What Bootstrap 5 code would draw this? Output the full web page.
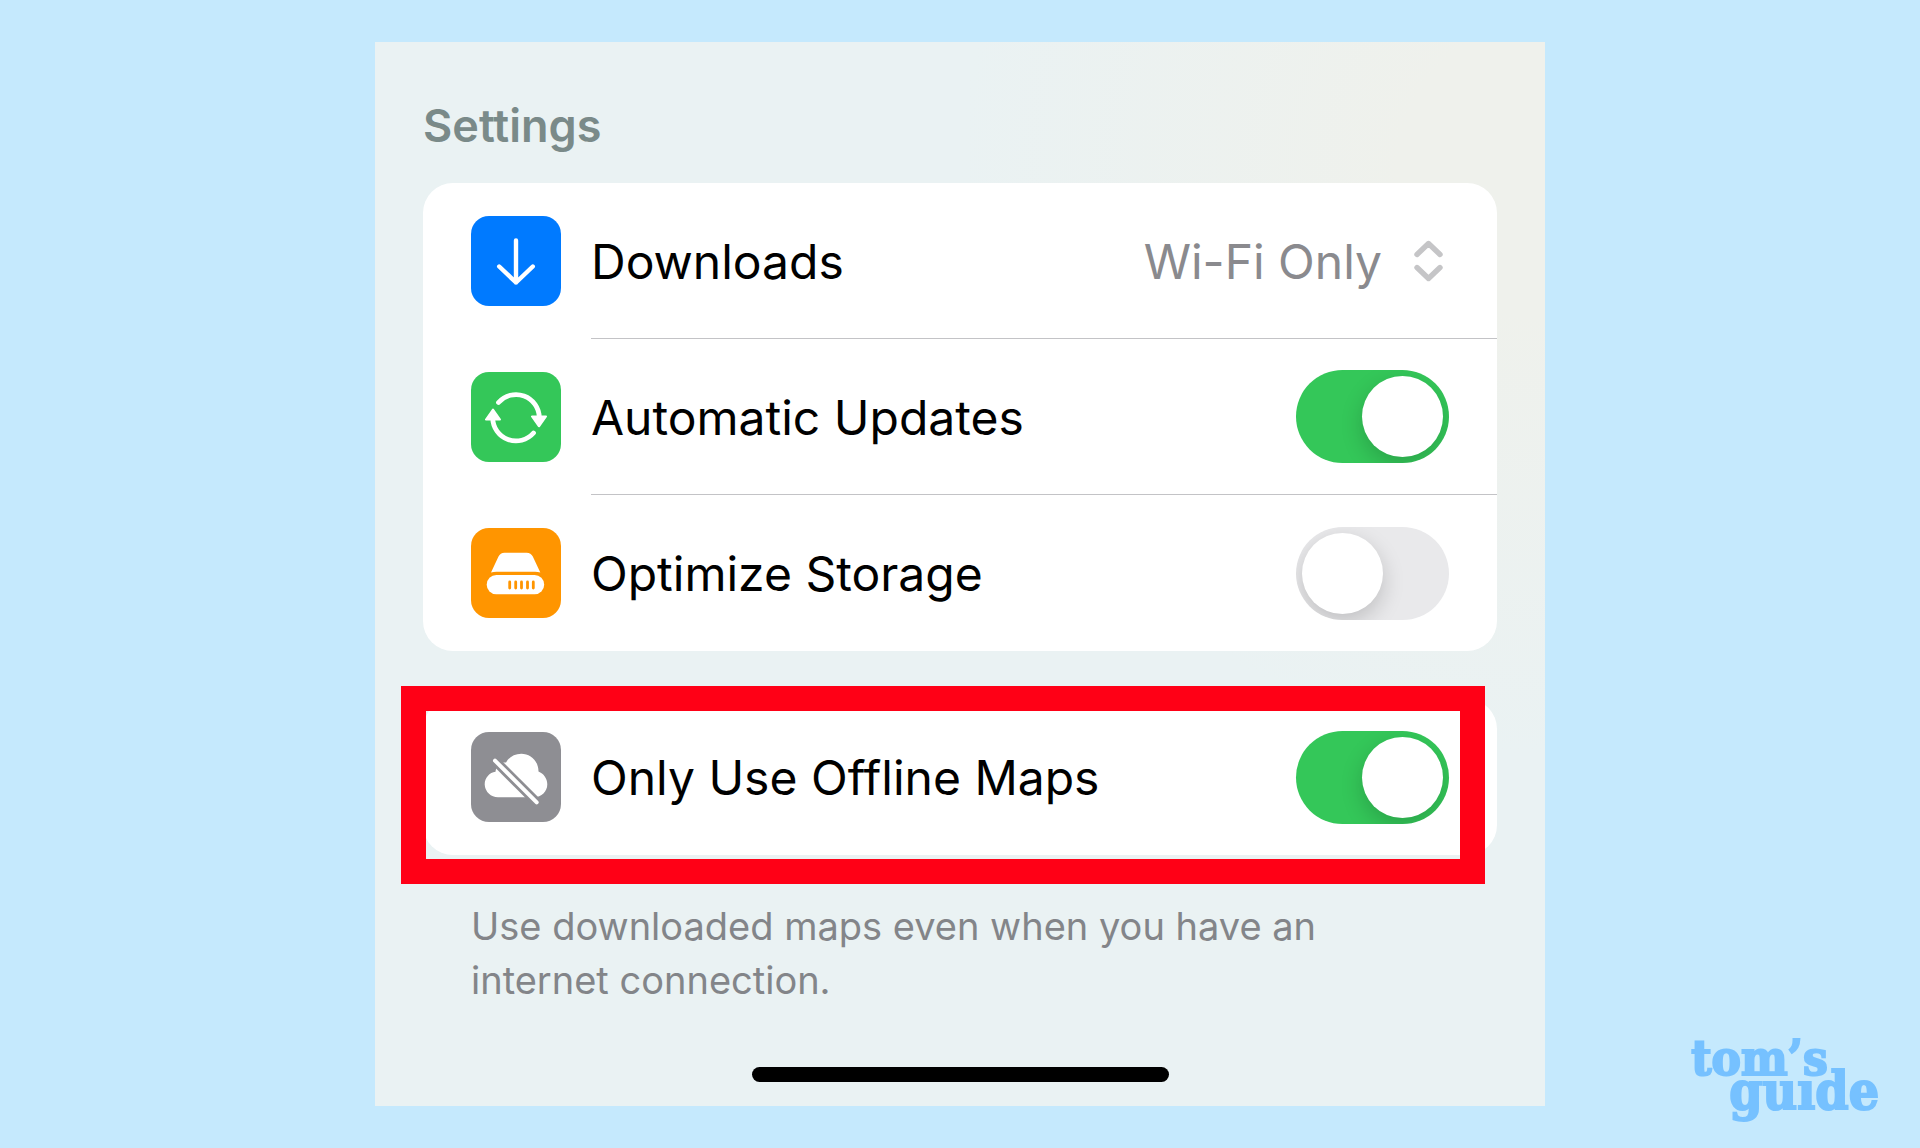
<!DOCTYPE html>
<html lang="en">
<head>
<meta charset="utf-8">
<meta name="viewport" content="width=device-width, initial-scale=1">
<title>Offline Maps Settings</title>
<link href="https://cdn.jsdelivr.net/npm/bootstrap@5.3.0/dist/css/bootstrap.min.css" rel="stylesheet">
<style>
  body { background: #c5e9fd; font-family: Inter, "Liberation Sans", sans-serif; color: #000; }
  .stage { min-height: 100vh; padding: 42px 0; }
  .side { flex: 1 1 0; }
  .phone {
    flex: 0 1 1170px; min-width: 0; padding: 56px 48px 24px;
    background:
      radial-gradient(ellipse 50% 55% at 100% 12%, #eff1ec 0%, #eff1ec 25%, rgba(239,241,236,0) 100%),
      #eaf2f3;
  }
  .section-title { font-size: 45px; line-height: 56px; font-weight: 600; color: #7a8a89; margin: 0 0 29px; }
  .group { background: #fff; border-radius: 30px; }
  .setting { gap: 30px; padding-left: 48px; }
  .tile { width: 90px; height: 90px; border-radius: 18px; flex: none; }
  .tile-blue { background: #007aff; }
  .tile-green { background: #34c759; }
  .tile-orange { background: #ff9500; }
  .tile-gray { background: #8e8e93; }
  .setting-body { height: 156px; padding-right: 48px; font-size: 48px; line-height: 64px; }
  .setting-body label, .picker select { padding: 2px 0 0; }
  .setting:not(:last-child) .setting-body { border-bottom: 1px solid #c3c3c6; }
  .picker { gap: 32px; padding-right: 6px; }
  .picker select { appearance: none; border: 0; background: none; color: #8a8a8e; text-align: right; }
  .form-switch .form-check-input.toggle {
    width: 153px; height: 93px; margin: 0; border: 0; border-radius: 47px;
    background: #e9e9eb; overflow: hidden; padding: 6px; display: flex; cursor: pointer;
  }
  .form-switch .form-check-input.toggle::before {
    content: ""; width: 81px; height: 81px; border-radius: 50%; background: #fff;
    box-shadow: 0 8px 22px rgba(0,0,0,.18);
  }
  .form-switch .form-check-input.toggle:checked { background: #34c759; justify-content: flex-end; }
  .second-group { margin-top: 48px; }
  .highlight { top: -13px; right: 12px; bottom: -29px; left: -22px; border: 25px solid #ff0016; pointer-events: none; }
  .note { font-size: 38px; line-height: 54px; color: #838589; margin: 44px 48px 60px; }
  .home-bar { width: 417px; height: 15px; border-radius: 8px; background: #000; }
  .brand-mark { font: bold 49px/33px "DejaVu Serif Condensed", "DejaVu Serif", serif; color: #76c1ff; -webkit-text-stroke: 2px #76c1ff; text-decoration: none; padding-right: 41px; }
  .brand-mark .indent { padding-left: 38px; font-size: 53px; line-height: 31px; }
</style>
</head>
<body>
<div class="stage d-flex">
  <div class="side"></div>
  <main class="phone">
    <h1 class="section-title">Settings</h1>

    <div class="group">
      <div class="setting d-flex align-items-center">
        <svg class="tile tile-blue" viewBox="0 0 90 90" fill="none" stroke="#fff" stroke-width="4.4" stroke-linecap="round" stroke-linejoin="round" aria-hidden="true">
          <path d="M45 24.500V66.500M28.200 50.500L45 66.500L61.800 50.500"/>
        </svg>
        <div class="setting-body flex-fill d-flex align-items-center justify-content-between">
          <label for="downloads">Downloads</label>
          <div class="picker d-flex align-items-center">
            <select id="downloads"><option>Wi-Fi Only</option></select>
            <svg width="29" height="42" viewBox="0 0 29 42" fill="none" stroke="#c5c5c7" stroke-width="5.400" stroke-linecap="round" stroke-linejoin="round" aria-hidden="true">
              <path d="M3 14.500L14.500 3.500L26 14.500M3 27.500L14.500 38.500L26 27.500"/>
            </svg>
          </div>
        </div>
      </div>

      <div class="setting d-flex align-items-center">
        <svg class="tile tile-green" viewBox="0 0 90 90" fill="none" stroke="#fff" stroke-width="4.800" stroke-linecap="round" stroke-linejoin="round" aria-hidden="true">
          <path d="M27.500 30.500A23.300 23.300 0 0 1 68.300 45.500M62.500 61A23.300 23.300 0 0 1 21.700 46"/>
          <path d="M61 44.500H75L68 54.300ZM15 47.500H29L22 37.500Z" fill="#fff" stroke-width="2"/>
        </svg>
        <div class="setting-body flex-fill d-flex align-items-center justify-content-between">
          <label for="updates">Automatic Updates</label>
          <div class="form-switch p-0 m-0"><input class="form-check-input toggle" type="checkbox" role="switch" id="updates" checked></div>
        </div>
      </div>

      <div class="setting d-flex align-items-center">
        <svg class="tile tile-orange" viewBox="0 0 90 90" aria-hidden="true">
          <path fill="#fff" d="M20 44.500L27.500 28.500Q29.300 24.700 33.500 24.700H55.500Q60 24.700 61.800 28.500L69.300 44.500Q67 43.800 64 43.800H25.500Q22.500 43.800 20 44.500Z"/>
          <rect x="15.700" y="47" width="57.500" height="19.300" rx="9.650" fill="#fff"/>
          <path d="M38.700 54V60M44.700 54V60M50.500 54V60M56.500 54V60M62.300 54V60" stroke="#ff9500" stroke-width="2.800" stroke-linecap="round"/>
        </svg>
        <div class="setting-body flex-fill d-flex align-items-center justify-content-between">
          <label for="storage">Optimize Storage</label>
          <div class="form-switch p-0 m-0"><input class="form-check-input toggle" type="checkbox" role="switch" id="storage"></div>
        </div>
      </div>
    </div>

    <div class="second-group position-relative">
      <div class="group">
        <div class="setting d-flex align-items-center">
          <svg class="tile tile-gray" viewBox="0 0 90 90" aria-hidden="true">
            <path fill="#fff" d="M27 65.300A13.300 13.300 0 0 1 13.700 52.500C13.700 46 18.500 40.500 24.500 39.800C25 34.500 29 29.600 35 30.500C38 25 43.500 21.700 50.300 21.700C59.500 21.700 67.500 29 67.500 39.500C72.500 41.500 76.300 46.300 76.300 52.300C76.300 59.500 70.500 65.300 63 65.300Z"/>
            <path d="M21 25.700L68 72.700" stroke="#8e8e93" stroke-width="9.500"/>
            <path d="M24 28.700L65.700 70.300" stroke="#fff" stroke-width="4" stroke-linecap="round"/>
          </svg>
          <div class="setting-body flex-fill d-flex align-items-center justify-content-between">
            <label for="offline">Only Use Offline Maps</label>
            <div class="form-switch p-0 m-0"><input class="form-check-input toggle" type="checkbox" role="switch" id="offline" checked></div>
          </div>
        </div>
      </div>
      <div class="highlight position-absolute"></div>
    </div>

    <p class="note">Use downloaded maps even when you have an internet connection.</p>
    <div class="home-bar mx-auto"></div>
  </main>
  <div class="side d-flex align-items-end justify-content-end">
    <a class="brand-mark" href="#" aria-label="tom’s guide"><div>tom’s</div><div class="indent">guıde</div></a>
  </div>
</div>
<script src="https://cdn.jsdelivr.net/npm/bootstrap@5.3.0/dist/js/bootstrap.bundle.min.js"></script>
</body>
</html>
